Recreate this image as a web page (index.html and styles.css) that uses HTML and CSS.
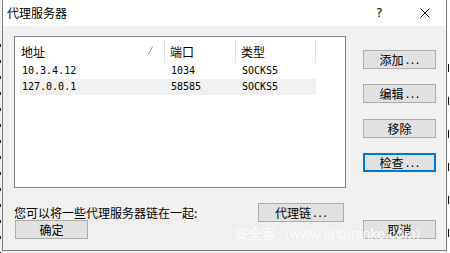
FILE: index.html
```html
<!DOCTYPE html>
<html lang="zh-CN">
<head>
  <meta charset="UTF-8" />
  <meta name="viewport" content="width=device-width, initial-scale=1.0"/>
  <link rel="stylesheet" href="styles.css">
  <title>代理服务器</title>
</head>
<body>
  <div class="desk">
    <div class="edge edge-left"></div>

    <div class="dialog">
      <div class="titlebar">
        <span class="title">代理服务器</span>
        <span class="help">?</span>
        <svg class="close" width="10" height="10" viewBox="0 0 10 10">
          <path d="M0.5 0.5 L9.5 9.5 M9.5 0.5 L0.5 9.5" stroke="#000" stroke-width="1" fill="none"/>
        </svg>
      </div>

      <div class="content">
        <div class="top">
          <div class="list">
            <div class="list-head">
              <div class="hcell first">
                <span>地址</span>
                <svg class="sort" width="5" height="9" viewBox="0 0 5 9">
                  <path d="M0.5 8.5 L4.5 0.5" stroke="#9a9a9a" stroke-width="1" fill="none"/>
                </svg>
              </div>
              <div class="hcell">端口</div>
              <div class="hcell">类型</div>
            </div>
            <div class="row">
              <div class="cell first">10.3.4.12</div>
              <div class="cell">1034</div>
              <div class="cell">SOCKS5</div>
            </div>
            <div class="row selected">
              <div class="cell first">127.0.0.1</div>
              <div class="cell">58585</div>
              <div class="cell">SOCKS5</div>
            </div>
          </div>

          <div class="actions">
            <button class="btn">添加<span class="dots">...</span></button>
            <button class="btn">编辑<span class="dots">...</span></button>
            <button class="btn remove">移除</button>
            <button class="btn focused">检查<span class="dots">...</span></button>
          </div>
        </div>

        <div class="chain">
          <span class="hint">您可以将一些代理服务器链在一起:</span>
          <button class="btn chain-btn">代理链<span class="dots">...</span></button>
        </div>

        <div class="footer">
          <button class="btn ok">确定</button>
          <button class="btn">取消</button>
        </div>
      </div>
    </div>

    <div class="edge edge-right"></div>
  </div>

  <div class="watermark">安全客（www.anquanke.com）</div>
</body>
</html>
```

FILE: styles.css
```css
body {
  margin: 0;
  width: 450px;
  height: 253px;
  overflow: hidden;
  position: relative;
  background: #f0f0f0;
  font-family: "Noto Sans CJK SC", sans-serif;
  font-size: 12px;
  color: #000;
}

.desk {
  display: flex;
  height: 253px;
}

.edge-left {
  width: 2px;
  background:
    repeating-linear-gradient(to bottom, transparent 0 6px, #222 6px 9px, transparent 9px 16px) 0 38px / 1px 100% no-repeat,
    #f0f0f0;
}

.edge-right {
  flex: 1;
  background:
    repeating-linear-gradient(to bottom, transparent 0 4px, #111 4px 12px, transparent 12px 33px) 1px 60px / 1px 100% no-repeat,
    linear-gradient(#f6f6f6, #f6f6f6) 0 0 / 1px 100% no-repeat,
    #ffffff;
}

.dialog {
  width: 443px;
  height: 250px;
  border: 1px solid #7d7d7d;
  border-top: none;
  background: #f0f0f0;
  display: flex;
  flex-direction: column;
}

.titlebar {
  height: 26px;
  background: #fff;
  display: flex;
  align-items: center;
  padding-left: 4px;
}

.title {
  line-height: 26px;
}

.help {
  margin-left: auto;
  width: 12px;
  text-align: center;
  font-family: "DejaVu Sans Mono", monospace;
  font-size: 12px;
}

.close {
  margin-left: 35px;
  margin-right: 16px;
}

.content {
  padding: 10px 0 0 11px;
}

.top {
  display: flex;
  height: 152px;
}

.list {
  width: 330px;
  height: 150px;
  border: 1px solid #828790;
  background: #fff;
}

.list-head,
.row {
  display: grid;
  grid-template-columns: 145px 71px 80px;
  margin-left: 5px;
}

.list-head {
  height: 26px;
}

.hcell {
  margin-top: 3px;
  height: 23px;
  box-sizing: border-box;
  border-right: 1px solid #e5e5e5;
  display: flex;
  align-items: center;
  padding-left: 5px;
}

.hcell.first {
  padding-left: 1px;
  padding-right: 11px;
  justify-content: space-between;
}

.sort {
  margin-top: -3px;
}

.row {
  height: 16px;
  width: 296px;
}

.row.selected {
  background: #f0f0f0;
}

.cell {
  font-family: "DejaVu Sans Mono", monospace;
  font-size: 10px;
  line-height: 16px;
  padding-left: 6px;
}

.cell.first {
  padding-left: 2px;
}

.actions {
  margin-left: 17px;
  padding-top: 14px;
  display: flex;
  flex-direction: column;
  gap: 15px;
}

.btn {
  width: 73px;
  height: 19px;
  box-sizing: border-box;
  padding: 0;
  border: 1px solid #adadad;
  background: #e1e1e1;
  font-family: "Noto Sans CJK SC", sans-serif;
  font-size: 12px;
  color: #000;
  display: flex;
  align-items: center;
  justify-content: center;
  line-height: 1;
}

.dots {
  font-family: "DejaVu Sans Mono", monospace;
  font-size: 10px;
  letter-spacing: -1px;
  margin-left: 1px;
  margin-top: 3px;
}

.remove {
  margin-top: 1px;
}

.focused {
  border: 2px solid #0078d7;
}

.chain {
  width: 332px;
  height: 19px;
  margin-top: 15px;
  display: flex;
  align-items: center;
  justify-content: space-between;
}

.chain-btn {
  width: 86px;
  margin-right: 2px;
}

.footer {
  margin-top: -2px;
  padding-right: 10px;
  display: flex;
  justify-content: space-between;
}

.ok {
  margin-left: 1px;
}

.watermark {
  position: absolute;
  left: 234px;
  top: 226px;
  font-family: "Liberation Sans", "Noto Sans CJK SC", sans-serif;
  font-size: 14px;
  line-height: 16px;
  color: rgba(255, 255, 255, 0.85);
  white-space: nowrap;
}
```
